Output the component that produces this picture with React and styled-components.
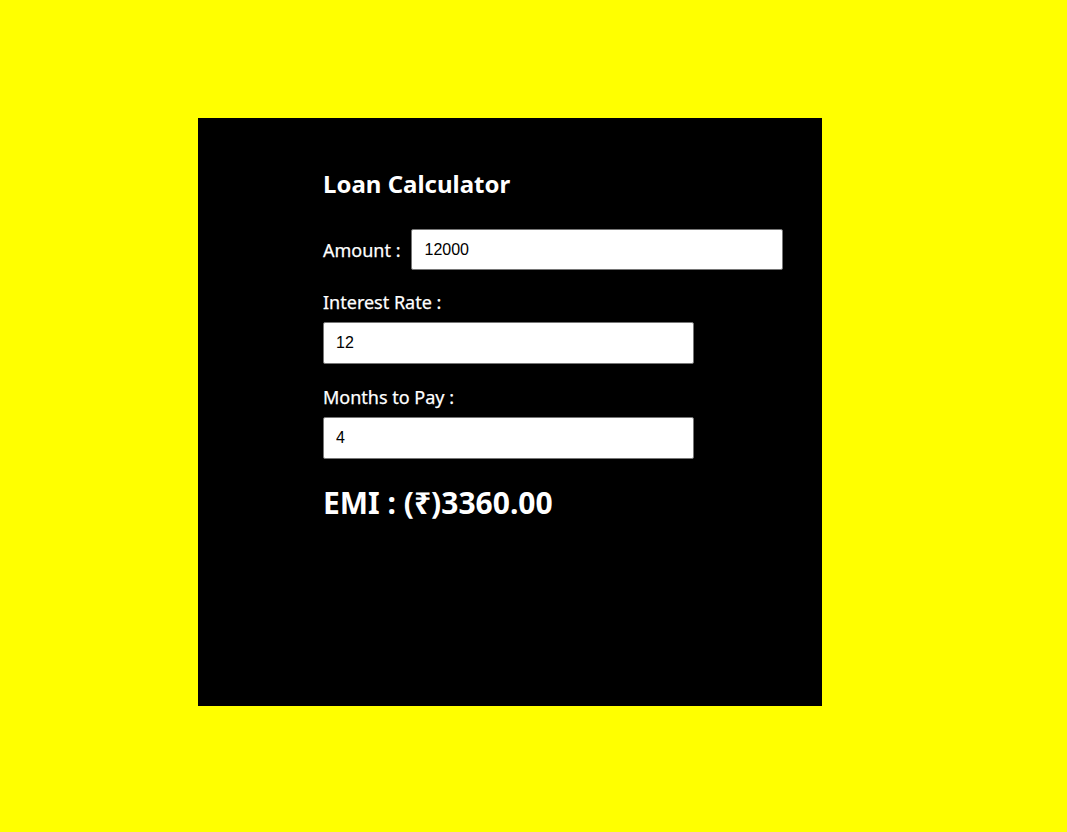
import React, { useState } from "react";
import styled, { createGlobalStyle } from "styled-components";

const GlobalStyle = createGlobalStyle`
  html, body {
    margin: 0;
    background: #ffff00;
  }
  body {
    padding: 118px 0 0 198px;
    font-family: "Trebuchet MS", "Noto Sans", sans-serif;
  }
`;

const Card = styled.div`
  width: 624px;
  height: 588px;
  box-sizing: border-box;
  background: #000;
  color: #fff;
  padding: 50px 0 0 125px;
  display: flex;
  flex-direction: column;
`;

const Title = styled.h2`
  margin: 0 0 29px;
  font-size: 24px;
  font-weight: bold;
  line-height: 32px;
`;

const Row = styled.div`
  display: flex;
  align-items: center;
  gap: 11px;
  margin-bottom: ${(p) => p.$gap || 20}px;
`;

const Field = styled.div`
  display: flex;
  flex-direction: column;
  gap: 9px;
  margin-bottom: ${(p) => p.$gap || 20}px;
`;

const Label = styled.label`
  font-size: 18px;
  line-height: 22px;
  white-space: nowrap;
  -webkit-text-stroke: 0.25px #fff;
`;

const Input = styled.input`
  flex-shrink: 0;
  width: ${(p) => p.$w || 371}px;
  height: ${(p) => p.$h || 41}px;
  box-sizing: border-box;
  border: 1px solid #767676;
  border-radius: 2px;
  padding: 0 12px;
  font-family: "Liberation Sans", Arial, sans-serif;
  font-size: 16px;
  color: #000;
  background: #fff;
  outline: none;
`;

const Result = styled.h2`
  margin: 6px 0 0;
  font-size: 30px;
  font-weight: bold;
  line-height: 36px;
`;

export default function App() {
  const [amount, setAmount] = useState("12000");
  const [rate, setRate] = useState("12");
  const [months, setMonths] = useState("4");

  const p = parseFloat(amount) || 0;
  const n = parseFloat(months) || 0;
  const r = (parseFloat(rate) || 0) / 100;
  const emi = n ? (p * (1 + r)) / n : 0;

  return (
    <>
      <GlobalStyle />
      <Card>
        <Title>Loan Calculator</Title>
        <Row $gap={21}>
          <Label>Amount :</Label>
          <Input $w={372} $h={41} value={amount} onChange={(e) => setAmount(e.target.value)} />
        </Row>
        <Field $gap={22}>
          <Label>Interest Rate :</Label>
          <Input $h={42} value={rate} onChange={(e) => setRate(e.target.value)} />
        </Field>
        <Field $gap={20}>
          <Label>Months to Pay :</Label>
          <Input $h={42} value={months} onChange={(e) => setMonths(e.target.value)} />
        </Field>
        <Result>EMI : (₹){emi.toFixed(2)}</Result>
      </Card>
    </>
  );
}
